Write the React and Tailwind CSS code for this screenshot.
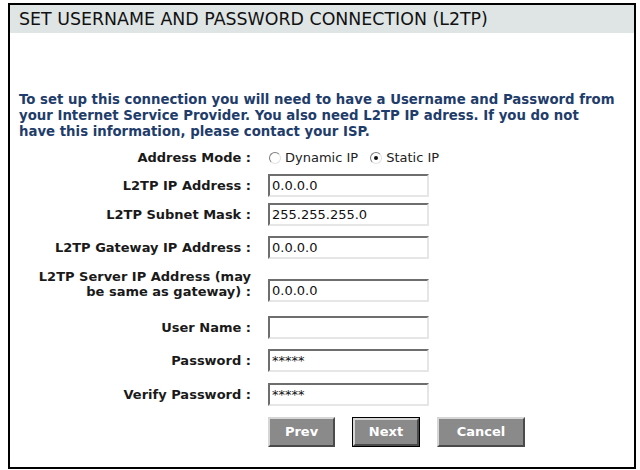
import React from "react";

const FONT = { fontFamily: '"DejaVu Sans", Verdana, sans-serif' };

const ROWS = [
  { label: ["L2TP IP Address :"], value: "0.0.0.0", h: "h-[26px]" },
  { label: ["L2TP Subnet Mask :"], value: "255.255.255.0", h: "h-[32px]" },
  { label: ["L2TP Gateway IP Address :"], value: "0.0.0.0", h: "h-[34px]" },
  { label: ["L2TP Server IP Address (may", "be same as gateway) :"], value: "0.0.0.0", h: "h-[52px]", up: true },
  { label: ["User Name :"], value: "", h: "h-[22px]" },
  { label: ["Password :"], value: "*****", h: "h-[44px]" },
  { label: ["Verify Password :"], value: "*****", h: "h-[24px]" },
];

const Radio = ({ checked, label }) => (
  <span className="flex items-center gap-[4px]">
    <span className="relative w-[12px] h-[12px] rounded-full border border-t-[#7d7d7d] border-l-[#7d7d7d] border-r-[#e2e2e2] border-b-[#e2e2e2] bg-white">
      {checked && <span className="absolute left-[3px] top-[3px] w-[4px] h-[4px] rounded-full bg-[#111]" />}
    </span>
    <span className="text-[13px] text-[#222]">{label}</span>
  </span>
);

const Field = ({ value }) => (
  <div className="w-[161px] h-[23px] bg-white border-2 border-t-[#6e6e6e] border-l-[#6e6e6e] border-r-[#e6e6e6] border-b-[#e6e6e6] flex items-center pl-[2px] text-[13px] text-[#111] leading-none">
    {value}
  </div>
);

const Btn = ({ children, focused, w }) => (
  <div className={focused ? "border border-black" : ""}>
    <div className={`${w} ${focused ? "h-[28px]" : "h-[30px]"} bg-[#8a8a8a] border-2 border-t-[#d6d6d6] border-l-[#d6d6d6] border-r-[#4a4a4a] border-b-[#4a4a4a] flex items-center justify-center text-white font-bold text-[13px]`}>
      {children}
    </div>
  </div>
);

export default function App() {
  return (
    <div className="w-[640px] h-[470px] bg-white pl-[8px] pt-[3px]" style={FONT}>
      <div className="w-[628px] h-[466px] border-2 border-black flex flex-col">
        <div className="h-[28px] bg-[#dfe4e4] flex items-center pl-[9px] text-[17.4px] text-[#111]">
          SET USERNAME AND PASSWORD CONNECTION (L2TP)
        </div>
        <p className="mt-[59px] pl-[9px] pr-[16px] text-[13.3px] leading-[16px] font-bold text-[#1f3d6b]">
          To set up this connection you will need to have a Username and Password from your Internet Service Provider. You also need L2TP IP adress. If you do not have this information, please contact your ISP.
        </p>
        <div className="mt-[4px] flex flex-col">
          <div className="h-[28px] flex items-center">
            <div className="w-[241px] text-right font-bold text-[13px] text-[#1a1a1a]">Address Mode :</div>
            <div className="ml-[18px] flex items-center gap-[12px]">
              <Radio label="Dynamic IP" />
              <Radio checked label="Static IP" />
            </div>
          </div>
          {ROWS.map((r) => (
            <div key={r.label[0]} className={`${r.h} flex items-center`}>
              <div className={`w-[241px] text-right font-bold text-[13px] leading-[15px] text-[#1a1a1a] ${r.up ? "-mt-[12px]" : ""}`}>
                {r.label.map((l) => (
                  <div key={l}>{l}</div>
                ))}
              </div>
              <div className="ml-[17px]">
                <Field value={r.value} />
              </div>
            </div>
          ))}
          <div className="h-[52px] flex items-center pl-[258px] gap-[17px]">
            <Btn w="w-[67px]">Prev</Btn>
            <Btn focused w="w-[66px]">Next</Btn>
            <Btn w="w-[88px]">Cancel</Btn>
          </div>
        </div>
      </div>
    </div>
  );
}
